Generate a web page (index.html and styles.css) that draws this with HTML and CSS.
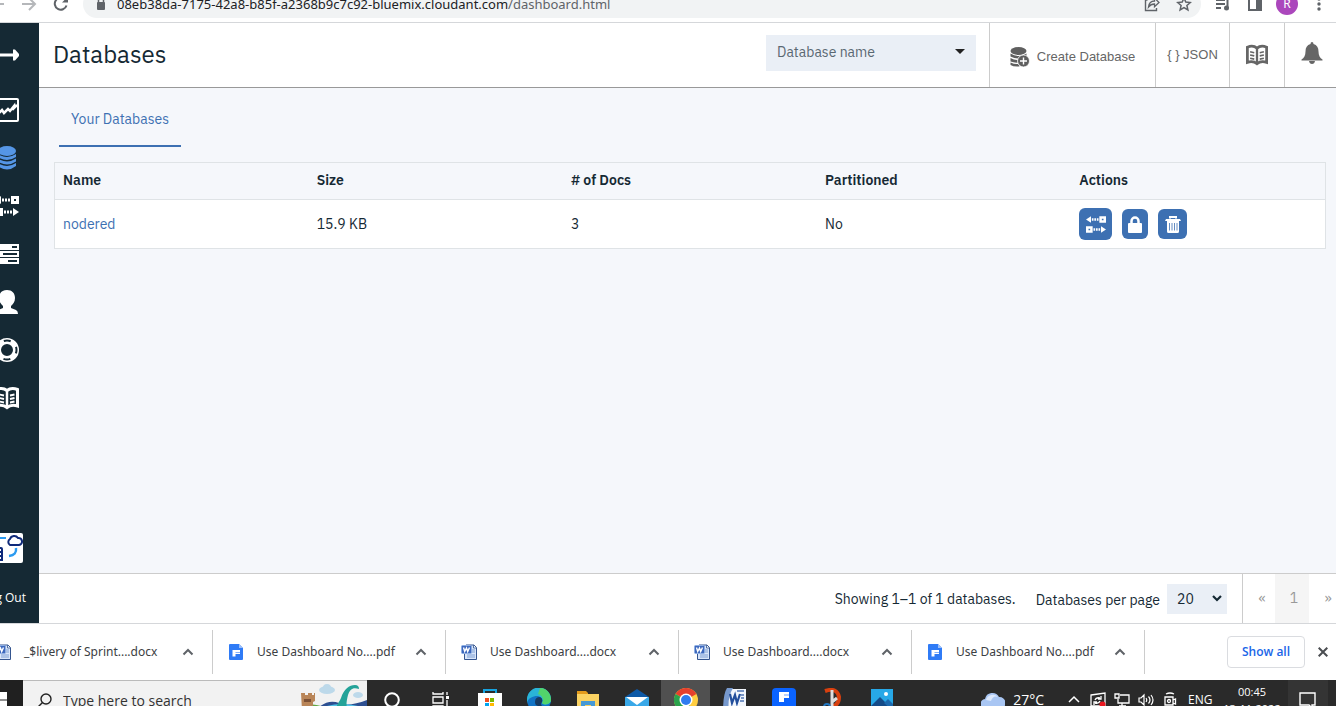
FILE: index.html
```html
<!DOCTYPE html>
<html lang="en">
<head>
<meta charset="utf-8">
<title>Databases</title>
<link rel="stylesheet" href="styles.css">
</head>
<body>
<svg class="defs" aria-hidden="true">
  <symbol id="chevron" viewBox="0 0 12 12"><path d="M1.500 8.500 6 4l4.500 4.500" fill="none" stroke="#5f6368" stroke-width="2"/></symbol>
  <symbol id="pdf" viewBox="0 0 14 16"><path d="M1 0h9l4 4v11a1 1 0 0 1-1 1H1a1 1 0 0 1-1-1V1a1 1 0 0 1 1-1z" fill="#2f7bf6"/><path d="M10 0l4 4h-4z" fill="#9cc0fb"/><path d="M3.500 6h7.500v4H6.500v2.500h-3z" fill="#fff"/><path d="M6.500 8.500H11" stroke="#2f7bf6" stroke-width=".6"/></symbol>
  <symbol id="doc" viewBox="0 0 16 16"><path d="M5 1h8l2.500 2.500v12H3.500V9z" fill="#d9e6fa" stroke="#34558f"/><path d="M12.500 1v3H15" fill="#fff" stroke="#34558f" stroke-width=".8"/><path d="M11 6h3M11 8h3M6 11h8M6 13h8" stroke="#7f9fd2"/><rect x=".5" y="1.500" width="10" height="8" rx="1" fill="#3d68bd" stroke="#8daee3"/><path d="m2.500 3.500 1.200 4 1.800-3.500 1.200 3.500 1.800-4" fill="none" stroke="#fff" stroke-width="1.400"/></symbol>
  <symbol id="replicate" viewBox="0 0 24 20"><path d="M0 4l6-4v8zM24 16l-6-4v8z"/><path d="M7 2.500h2v3H7zm3 0h2v3h-2zm3 0h2v3h-2zM9 14.500h2v3H9zm3 0h2v3h-2zm3 0h2v3h-2z"/><path fill-rule="evenodd" d="M16 0h8v8h-8zm3 3v2h2V3zM0 12h8v8H0zm3 3v2h2v-2z"/></symbol>
  <symbol id="book" viewBox="0 0 24 24"><path d="M1.500 3.500C5 2 9 2 12 4.500 15 2 19 2 22.500 3.500v16.500C19 19 15 19 12 21.500 9 19 5 19 1.500 20z" fill="none" stroke="currentColor" stroke-width="3"/><path d="M12 4v17" stroke="currentColor" stroke-width="2.500"/><path d="M4.500 8.500l4.500 1M4.500 12l4.500 1M4.500 15.500l4.500 1M15 9.500l4.500-1M15 13l4.500-1M15 16.500l4.500-1" stroke="currentColor" stroke-width="1.800"/></symbol>
</svg>

<header class="browser">
  <div class="browser-row">
    <button class="nav-btn back" aria-label="Back"><svg width="16" height="16" viewBox="0 0 16 16"><path d="M15 8H2m6-6L2 8l6 6" fill="none" stroke="#b5b7ba" stroke-width="2"/></svg></button>
    <button class="nav-btn" aria-label="Forward"><svg width="16" height="16" viewBox="0 0 16 16"><path d="M1 8h13M8 2l6 6-6 6" fill="none" stroke="#b5b7ba" stroke-width="2"/></svg></button>
    <button class="nav-btn" aria-label="Reload"><svg width="16" height="16" viewBox="0 0 16 16"><path d="M13.500 9.500A6 6 0 1 1 12.500 4" fill="none" stroke="#5f6368" stroke-width="2"/><path d="M15 .5v6H9z" fill="#5f6368"/></svg></button>
    <div class="address">
      <svg class="lock" width="10" height="14" viewBox="0 0 10 14"><rect x="1" y="5" width="8" height="8" rx="1" fill="#5f6368"/><path d="M2.500 6V3.500a2.500 2.500 0 0 1 5 0V6" fill="none" stroke="#5f6368" stroke-width="1.500"/></svg>
      <span class="url"><b>08eb38da-7175-42a8-b85f-a2368b9c7c92-bluemix.cloudant.com</b>/dashboard.html</span>
      <svg width="16" height="16" viewBox="0 0 16 16"><path d="M3.500 4H1.500v10.500h11V12" fill="none" stroke="#5f6368" stroke-width="1.400"/><path d="M4.500 11C5 7 7.500 5 10.500 5V2l4.500 4.500-4.500 4.300V8C8 8 6 9 4.500 11z" fill="none" stroke="#5f6368" stroke-width="1.300"/></svg>
      <svg width="16" height="16" viewBox="0 0 16 16"><path d="m8 2 1.800 4.100 4.500.4-3.400 3 1 4.400L8 11.600 4.100 13.900l1-4.400-3.400-3 4.500-.4z" fill="none" stroke="#5f6368" stroke-width="1.500"/></svg>
    </div>
    <div class="browser-tools">
      <svg width="16" height="16" viewBox="0 0 16 16"><path d="M1 4h9M1 8h9M1 12h5" stroke="#5f6368" stroke-width="2"/><path d="M12.500 12V3H16" fill="none" stroke="#5f6368" stroke-width="2"/><circle cx="11.500" cy="12" r="2.500" fill="#5f6368"/></svg>
      <svg width="16" height="16" viewBox="0 0 16 16"><rect x="2" y="2" width="12" height="12" fill="none" stroke="#5f6368" stroke-width="2"/><path d="M9 2h5v12H9z" fill="#5f6368"/></svg>
      <span class="avatar">R</span>
      <svg width="16" height="16" viewBox="0 0 16 16" fill="#5f6368"><circle cx="8" cy="3" r="1.700"/><circle cx="8" cy="8" r="1.700"/><circle cx="8" cy="13" r="1.700"/></svg>
    </div>
  </div>
</header>

<div class="app">
  <nav class="sidebar" aria-label="Main">
    <a href="#" class="expand" aria-label="Expand"><svg width="24" height="12" viewBox="0 0 24 12"><path d="M0 4.500h18V.5h2l5 5.500-5 5.500h-2v-4H0z" fill="#fff"/></svg></a>
    <a href="#" aria-label="Monitoring"><svg width="24" height="24" viewBox="0 0 24 24" fill="none" stroke="#fff"><rect x="1" y="1" width="22" height="22" rx="1" stroke-width="2"/><path d="m3 16 4-4 2 3 4-4 2 2 4-5v2l3-3" stroke-width="2.500"/></svg></a>
    <a href="#" aria-label="Databases"><svg width="24" height="24" viewBox="0 0 24 24" fill="#5596e6"><ellipse cx="12" cy="5" rx="9" ry="5"/><path d="M3 8q9 6 18 0v3q-9 6-18 0zM3 12.500q9 6 18 0v3q-9 6-18 0zM3 17q9 6 18 0v3q-9 7-18 0z"/></svg></a>
    <a href="#" aria-label="Replication"><svg width="24" height="20" fill="#fff"><use href="#replicate"/></svg></a>
    <a href="#" aria-label="Active tasks"><svg width="24" height="22" viewBox="0 0 24 22"><path d="M0 1h24v6H0zM0 8h24v6H0zM0 15h24v6H0z" fill="#fff"/><path d="M17 4h5M8 11h14M13 18h9" stroke="#152934" stroke-width="2"/></svg></a>
    <a href="#" aria-label="Account"><svg width="24" height="24" viewBox="0 0 24 24" fill="#fff"><path d="M12 0c5 0 8 3 8 8 0 4-2 6-4 8v2l5 2q2 1 2 4H1q0-3 2-4l5-2v-2c-2-2-4-4-4-8 0-5 3-8 8-8z"/></svg></a>
    <a href="#" aria-label="Support"><svg width="24" height="24" viewBox="0 0 24 24" fill="none" stroke="#fff"><circle cx="12" cy="12" r="9" stroke-width="6"/><circle cx="12" cy="12" r="9.500" stroke="#152934" stroke-width="2" stroke-dasharray="7 7.920" stroke-dashoffset="3.500"/></svg></a>
    <a href="#" aria-label="Documentation"><svg width="24" height="24"><use href="#book"/></svg></a>
    <div class="sidebar-end">
      <a href="#" class="brand" aria-label="Cloudant"><svg width="46" height="30" viewBox="0 0 46 30"><rect width="46" height="30" rx="2" fill="#fff"/><path d="M33 12a3.500 3.500 0 0 1 0-6 4.500 4.500 0 0 1 8-1 3.500 3.500 0 0 1 1 7z" fill="none" stroke="#0f2a7a" stroke-width="2"/><path d="M22 5h7" stroke="#2c9bf0" stroke-width="2"/><path d="M39 15q1 7-7 8" fill="none" stroke="#2c9bf0" stroke-width="2.500"/><path d="M16 15h8q1 0 1 1v11h-9M16 19h9M16 23h9" fill="none" stroke="#0f2a7a" stroke-width="2"/></svg></a>
      <a href="#" class="logout">Log Out</a>
    </div>
  </nav>

  <div class="page">
    <header class="page-head">
      <h1>Databases</h1>
      <label class="picker">
        <select aria-label="Database name"><option>Database name</option></select>
        <svg width="10" height="5" viewBox="0 0 10 5"><path d="M0 0h10L5 5z" fill="#222"/></svg>
      </label>
      <button class="head-btn create">
        <svg width="20" height="20" viewBox="0 0 20 20"><g fill="#5f5f5f"><ellipse cx="8.500" cy="4" rx="8" ry="4"/><path d="M.5 6.500q8 5 16 0v3q-8 4-16 0zM.5 11q4 2.500 8 2v2.500q-4 .5-8-1zM.5 15.500q4 2 8 1.500l1 2.500q-6 .5-9-1.500z"/><circle cx="13.500" cy="14" r="6" stroke="#fff" stroke-width=".8"/></g><path d="M13.500 10.500v7M10 14h7" stroke="#fff" stroke-width="1.400"/></svg>
        Create Database
      </button>
      <a href="#" class="head-btn json">{ } JSON</a>
      <a href="#" class="head-btn docs" aria-label="Documentation"><svg width="22" height="22"><use href="#book"/></svg></a>
      <button class="head-btn bell" aria-label="Notifications"><svg width="22" height="22" viewBox="0 0 22 22" fill="#666"><path d="M11 0q1.500 0 1.500 2c3.500 1 5 3.500 5 7.500 0 4 1.500 6.500 4 8v1H.5v-1c2.500-1.500 4-4 4-8 0-4 1.500-6.500 5-7.500Q9.500 0 11 0z"/><path d="M8 19h6q-.5 3-3 3t-3-3z"/></svg></button>
    </header>

    <main class="content">
      <div class="tabs"><a href="#" class="tab">Your Databases</a></div>
      <table class="databases">
        <thead><tr><th>Name</th><th>Size</th><th># of Docs</th><th>Partitioned</th><th>Actions</th></tr></thead>
        <tbody><tr>
          <td><a href="#">nodered</a></td><td>15.9 KB</td><td>3</td><td>No</td>
          <td><div class="actions">
            <button class="act act-rep" aria-label="Replicate"><svg width="20" height="17" fill="#fff"><use href="#replicate"/></svg></button>
            <button class="act act-lock" aria-label="Permissions"><svg width="14" height="17" viewBox="0 0 14 17"><path d="M3.500 8V5a3.500 3.500 0 0 1 7 0v3" fill="none" stroke="#fff" stroke-width="2.500"/><rect y="7" width="14" height="10" rx="1" fill="#fff"/></svg></button>
            <button class="act act-del" aria-label="Delete"><svg width="16" height="17" viewBox="0 0 16 17"><path d="M5 2.500V1h6v1.500" fill="none" stroke="#fff" stroke-width="2"/><path d="M1 3h14l1 2H0zM2 5h12v10.500q0 1.500-1.500 1.500h-9Q2 17 2 15.500z" fill="#fff"/><path d="M4.500 7v7.500M7 7v7.500M9.500 7v7.500M12 7v7.500" stroke="#3d70b2" stroke-width=".8"/></svg></button>
          </div></td>
        </tr></tbody>
      </table>
    </main>

    <footer class="page-foot">
      <span class="showing">Showing 1–1 of 1 databases.</span>
      <label class="per-page" for="per-page">Databases per page</label>
      <span class="count">
        <select id="per-page"><option>20</option></select>
        <svg width="10" height="7" viewBox="0 0 10 7"><path d="m1 1 4 4 4-4" fill="none" stroke="#152934" stroke-width="2.200"/></svg>
      </span>
      <nav class="pager" aria-label="Pages"><a href="#" class="prev">«</a><a href="#" class="current">1</a><a href="#">»</a></nav>
    </footer>
  </div>
</div>

<section class="downloads" aria-label="Downloads">
  <div class="download-list">
    <button class="download"><svg width="16" height="16"><use href="#doc"/></svg><span>_$livery of Sprint....docx</span><svg width="12" height="12"><use href="#chevron"/></svg></button>
    <button class="download"><svg width="16" height="16"><use href="#pdf"/></svg><span>Use Dashboard No....pdf</span><svg width="12" height="12"><use href="#chevron"/></svg></button>
    <button class="download"><svg width="16" height="16"><use href="#doc"/></svg><span>Use Dashboard....docx</span><svg width="12" height="12"><use href="#chevron"/></svg></button>
    <button class="download"><svg width="16" height="16"><use href="#doc"/></svg><span>Use Dashboard....docx</span><svg width="12" height="12"><use href="#chevron"/></svg></button>
    <button class="download"><svg width="16" height="16"><use href="#pdf"/></svg><span>Use Dashboard No....pdf</span><svg width="12" height="12"><use href="#chevron"/></svg></button>
  </div>
  <button class="show-all">Show all</button>
  <button class="close" aria-label="Close"><svg width="10" height="10" viewBox="0 0 10 10"><path d="m.7.7 8.600 8.600M9.300.7.7 9.300" stroke="#4a4d51" stroke-width="2"/></svg></button>
</section>

<footer class="taskbar">
  <div class="taskbar-row">
    <button class="start" aria-label="Start"><svg width="16" height="16" viewBox="0 0 16 16"><path d="M0 0h7.500v7.500H0zM8.500 0H16v7.500H8.500zM0 8.500h7.500V16H0zM8.500 8.500H16V16H8.500z" fill="#fff"/></svg></button>
    <label class="search">
      <svg width="16" height="16" viewBox="0 0 16 16" fill="none" stroke="#222" stroke-width="1.400"><circle cx="10" cy="6" r="5"/><path d="m6.500 9.500-6 6"/></svg>
      <input type="text" placeholder="Type here to search" aria-label="Search">
      <svg class="scene" width="68" height="40" viewBox="0 0 68 40"><path d="M20 26q10-8 20-4t28-3v21H14z" fill="#2d4f91"/><path d="M22 27q20-8 44 0v13H18z" fill="#54c3e8"/><path d="M0 27q14-7 26 0l8 13H0z" fill="#63a744"/><path d="M2 12h4v2h3v-2h4v2h2v-2h1v8l-2 1v8H3z" fill="#b98558"/><path d="M5 18h7v3H5z" fill="#7c5136"/><path d="M38 29c-2-4 2-7 4-12 3-9 8-13 14-13q4 0 4 4c-6-2-9 0-11 6-2 8-2 11 0 15z" fill="#24a399"/><g fill="#bdd9ea"><ellipse cx="28" cy="9" rx="8" ry="4"/><circle cx="28" cy="7" r="4"/><ellipse cx="59" cy="14" rx="5" ry="3"/></g></svg>
    </label>
    <div class="apps">
      <button aria-label="Cortana"><svg width="18" height="18" viewBox="0 0 18 18"><circle cx="9" cy="9" r="6.800" fill="none" stroke="#fff" stroke-width="2"/></svg></button>
      <button aria-label="Task view"><svg width="18" height="18" viewBox="0 0 18 18" fill="none" stroke="#fff" stroke-width="1.300"><path d="M1 1v2h10V1M1 17v-2h10v2M1 6h10v6H1zM15 1v3M15 9v8"/><path d="M14 5h3v3h-3z" fill="#fff" stroke="none"/></svg></button>
      <button aria-label="Store"><svg width="24" height="24" viewBox="0 0 24 24"><path d="M6 6V2h12v4" fill="none" stroke="#17a3df" stroke-width="2"/><path d="M0 5h24v17H0z" fill="#fff"/><path d="M7 10h4v4H7z" fill="#f25022"/><path d="M12 10h4v4h-4z" fill="#7fba00"/><path d="M7 15h4v4H7z" fill="#00a4ef"/><path d="M12 15h4v4h-4z" fill="#ffb900"/></svg></button>
      <button aria-label="Edge"><svg width="24" height="24" viewBox="0 0 24 24"><circle cx="12" cy="12" r="12" fill="#1273c5"/><path d="M0 11a12 12 0 0 1 24 1c0 5-8 6-9 3 2-3-1-7-5-7S1 10 0 15z" fill="#2ab4d8"/><path d="M13 0c7 0 11 6 11 12 0 4-7 6-9 3 2-3 1-7-4-9z" fill="#52d36b"/><path d="M8 14q0-5 5-5 3 1 2 5-2 2 0 4-7 1-7-4z" fill="#173b62"/></svg></button>
      <button aria-label="File Explorer"><svg width="22" height="20" viewBox="0 0 22 20"><path d="M0 1h9l2 2v5H0z" fill="#e39b1c"/><path d="M0 4h22v16H0z" fill="#fad262"/><path d="M4 20v-9h14v9h-4v-5H8v5z" fill="#4699d5"/></svg></button>
      <button aria-label="Mail"><svg width="24" height="22" viewBox="0 0 24 22"><path d="m0 8 12-8 12 8v6H0z" fill="#0e59a6"/><path d="M0 8h24v14H0z" fill="#39a8e8"/><path d="M1 8h22l-11 8z" fill="#fff"/></svg></button>
      <button class="active" aria-label="Chrome"><svg width="24" height="24" viewBox="0 0 24 24"><circle cx="12" cy="12" r="12" fill="#ffcd40"/><path d="M12 12 1.600 6A12 12 0 0 1 22.400 6z" fill="#e6402e"/><path d="M12 12 1.600 6A12 12 0 0 0 12 24l5-9z" fill="#2ba24c"/><circle cx="12" cy="12" r="6.500" fill="#fff"/><circle cx="12" cy="12" r="5" fill="#2f7bf0"/></svg></button>
      <button aria-label="Word"><svg width="24" height="24" viewBox="0 0 24 24"><path d="M6 1h17v22H4z" fill="#f2f6fc"/><path d="M4 0h6Q4 10 6 24H0Q0 6 4 0z" fill="#7799cd"/><path d="m7 6 2 9 3-8 2 8 3-9" fill="none" stroke="#234f9c" stroke-width="2.200"/><path d="M14 3h7M18 7h3M18 10h3M17 13h4M8 19h13" stroke="#5075b4" stroke-width="1.400"/></svg></button>
      <button aria-label="Documents"><svg width="24" height="24" viewBox="0 0 24 24"><rect width="24" height="24" rx="4" fill="#0a63ff"/><path d="M7 4h10v6h-5v4H7z" fill="#fff"/><path d="M12 7h5" stroke="#0a63ff" stroke-width=".6"/></svg></button>
      <button aria-label="Snipping Tool"><svg width="22" height="24" viewBox="0 0 22 24"><path d="M3 3q12-4 14 6 0 9-9 10" fill="none" stroke="#d8400f" stroke-width="4"/><path d="M10 2v18M10 14l5-4" stroke="#dedede" stroke-width="3"/><circle cx="5" cy="19" r="3" fill="none" stroke="#2277c2" stroke-width="2"/></svg></button>
      <button aria-label="Photos"><svg width="22" height="22" viewBox="0 0 22 22"><path d="M0 0h22v22H0z" fill="#27a8e7"/><path d="m0 17 9-9 13 13v1H0z" fill="#144a87"/><path d="m13 14 4-4 5 5v7z" fill="#1c69ae"/><circle cx="15" cy="5" r="2" fill="#fff"/></svg></button>
    </div>
    <div class="weather"><svg width="24" height="18" viewBox="0 0 24 18"><path d="M5 18a5 5 0 0 1-1-10 7.500 7.500 0 0 1 14-2 6 6 0 0 1 1 12z" fill="#a9c6f3"/><path d="M5 9a7 7 0 0 1 12-3q-5-2-7 4z" fill="#dce9fd"/></svg>27°C</div>
    <div class="tray">
      <svg width="16" height="16" viewBox="0 0 16 16"><path d="m3 10 5-5 5 5" fill="none" stroke="#fff" stroke-width="1.500"/></svg>
      <svg width="16" height="16" viewBox="0 0 16 16" fill="none" stroke="#fff" stroke-width="1.300"><path d="M1 3l14-2v13H1zM5 8q1-3 5-2M11 4v3H8M10 9q-1 3-5 2M4 13v-3h3"/><circle cx="12.500" cy="12.500" r="3" fill="#ea1720" stroke="none"/></svg>
      <svg width="16" height="16" viewBox="0 0 16 16" fill="none" stroke="#fff" stroke-width="1.300"><path d="M6 3h9v8H4V7M1 2h4v4H1zM8 11v3M5 14h7"/></svg>
      <svg width="16" height="16" viewBox="0 0 16 16" fill="none" stroke="#fff" stroke-width="1.200"><path d="M1 6h2l3-3v10l-3-3H1zM8 6q1.500 2 0 4M10.500 4.500q3 3.500 0 7M13 3q4 5 0 10"/></svg>
      <svg width="16" height="16" viewBox="0 0 16 16" fill="none" stroke="#fff" stroke-width="1.300"><path d="M4 2q4-2 8 0M3 5h8v8H3zM11 8l2.500-1v5L11 11"/><circle cx="7" cy="9" r="1.500"/></svg>
    </div>
    <span class="lang">ENG</span>
    <div class="clock"><span>00:45</span><span>13-11-2022</span></div>
    <button class="notices" aria-label="Notifications"><svg width="18" height="18" viewBox="0 0 18 18" fill="none" stroke="#fff" stroke-width="1.400"><path d="M1 2h15v12h-3v3l-3-3H1z"/></svg></button>
  </div>
</footer>
</body>
</html>
```
FILE: styles.css
```css
* { box-sizing: border-box; }
html, body { height: 100%; }
body {
  margin: 0;
  display: flex;
  flex-direction: column;
  overflow: hidden;
  background: #fff;
  color: #152934;
  font: 14px/20px "IBM Plex Sans", Inter, sans-serif;
}
.defs { display: none; }
svg { flex: none; display: block; }
button { border: 0; padding: 0; background: none; font: inherit; color: inherit; display: flex; align-items: center; justify-content: center; }
a { color: #3d70b2; text-decoration: none; }
select { appearance: none; border: 0; border-radius: 0; font: inherit; color: inherit; }

/* Browser toolbar */
.browser {
  flex: none;
  height: 23px;
  display: flex;
  align-items: flex-end;
  border-bottom: 1px solid #d5d7da;
  overflow: hidden;
  font-family: "Segoe UI", "Noto Sans", sans-serif;
}
.browser-row { flex: 1; height: 36px; display: flex; align-items: center; }
.nav-btn { width: 32px; height: 32px; }
.nav-btn.back { width: 13px; justify-content: flex-end; padding-right: 8px; }
.address {
  flex: 1;
  height: 28px;
  margin-left: 6px;
  padding: 0 9px 0 13px;
  display: flex;
  align-items: center;
  gap: 16px;
  border-radius: 14px;
  background: #f1f3f4;
}
.lock { margin-right: -5px; }
.url { flex: 1; white-space: nowrap; color: #5f6368; font-size: 13px; }
.url b { font-weight: 400; color: #202124; }
.browser-tools { display: flex; align-items: center; gap: 16px; padding: 0 9px 0 14px; }
.avatar { width: 22px; height: 22px; margin: 0 -3px; border-radius: 50%; background: #ab47bc; color: #fff; font-size: 12px; line-height: 22px; text-align: center; }

/* Application frame */
.app { flex: 1; min-height: 0; display: flex; }
.sidebar { flex: none; width: 39px; display: flex; flex-direction: column; overflow: hidden; background: #152934; }
.sidebar a { flex: none; height: 48px; padding-right: 20px; display: flex; align-items: center; justify-content: flex-end; color: #fff; }
.sidebar .expand { height: 63px; }
.sidebar-end { margin-top: auto; }
.sidebar .brand { padding-right: 16px; }
.sidebar .logout { height: 51px; padding-right: 13px; white-space: nowrap; font: 500 12px/20px "Open Sans", sans-serif; }
.page { flex: 1; min-width: 0; display: flex; flex-direction: column; background: #f5f7fb; }

/* Page header */
.page-head { flex: none; height: 65px; display: flex; align-items: stretch; background: #fff; border-bottom: 1px solid #999; overflow: hidden; }
.page-head h1 { flex: 1; margin: 0; padding-left: 14px; font-size: 24px; line-height: 62px; font-weight: 400; }
.picker { width: 210px; height: 36px; margin: 12px 13px 0 0; display: grid; align-items: center; background: #eaeff6; color: #5a6872; }
.picker select, .picker svg { grid-area: 1 / 1; }
.picker select { height: 36px; padding: 0 11px 2px; background: transparent; }
.picker svg { justify-self: end; margin-right: 11px; margin-bottom: 4px; }
.head-btn { flex: none; display: flex; align-items: center; justify-content: center; gap: 7px; border-left: 1px solid #ccc; color: #666; font: 13px/20px "Liberation Sans", Arial, sans-serif; white-space: nowrap; }
.create { width: 166px; padding-top: 4px; }
.json { width: 74px; }
.docs { width: 55px; }
.bell { width: 52px; padding: 0 0 4px 3px; }

/* Content */
.content { flex: 1; padding: 0 10px 0 15px; }
.tabs { display: flex; padding-left: 5px; margin-bottom: 15px; }
.tab { height: 59px; padding: 21px 12px 0; border-bottom: 2px solid #3d70b2; }
.databases { width: 100%; table-layout: fixed; border-collapse: collapse; border: 1px solid #dfe3e6; text-align: left; }
.databases th { height: 37px; padding: 0 8px 2px; font-weight: 600; }
.databases td { height: 49px; padding: 0 8px; background: #fff; border-top: 1px solid #dfe3e6; }
.actions { display: flex; align-items: center; gap: 10px; }
.act { height: 30px; border-radius: 6px; background: #3d70b2; }
.act-rep { width: 33px; height: 32px; }
.act-lock { width: 26px; }
.act-del { width: 29px; }

/* Page footer */
.page-foot { flex: none; height: 50px; display: flex; align-items: center; justify-content: flex-end; background: #fff; border-top: 1px solid #ccc; }
.showing { margin-right: 20px; }
.per-page { margin-right: 7px; padding-top: 2px; }
.count { width: 60px; height: 30px; margin-right: 15px; display: grid; align-items: center; background: #eaeff6; }
.count select, .count svg { grid-area: 1 / 1; }
.count select { height: 30px; padding: 0 10px; background: transparent; }
.count svg { justify-self: end; margin-right: 5px; }
.pager { width: 94px; height: 100%; display: flex; overflow: hidden; border-left: 1px solid #ccc; }
.pager a { flex: none; width: 34px; padding-left: 4px; line-height: 49px; text-align: center; color: #999; }
.pager .prev { width: 32px; padding-left: 6px; }
.pager .current { background: #f5f5f5; }

/* Downloads shelf */
.downloads { flex: none; height: 57px; padding-right: 8px; display: flex; align-items: center; border-top: 1px solid #d5d7da; overflow: hidden; font: 12px/20px "Segoe UI", "Noto Sans", sans-serif; color: #3c4043; }
.download-list { flex: 1; min-width: 0; margin-left: -20px; display: flex; }
.download { flex: none; width: 233px; height: 44px; padding: 0 18px 0 15px; gap: 13px; border-right: 1px solid #ccc; }
.download span { flex: 1; text-align: left; white-space: nowrap; }
.show-all { width: 78px; height: 32px; margin-right: 13px; border: 1px solid #dadce0; border-radius: 4px; color: #1a66e8; font: 600 12px/20px "Open Sans", sans-serif; }

/* Taskbar */
.taskbar { flex: none; height: 26px; overflow: hidden; background: #2a2a2a; color: #fff; font-family: "Segoe UI", "Open Sans", sans-serif; }
.taskbar-row { height: 40px; display: flex; align-items: center; }
.start { width: 23px; height: 40px; padding-right: 16px; justify-content: flex-end; background: #202020; }
.search { width: 344px; height: 40px; padding-left: 13px; display: flex; align-items: center; gap: 11px; background: #f2f2f2; border-top: 1px solid #bbb; }
.search input { flex: 1; min-width: 0; border: 0; padding: 0; background: none; font: inherit; }
.search input::placeholder { color: #333; opacity: 1; }
.apps { display: flex; }
.apps button { width: 49px; height: 40px; }
.apps .active { background: #505050; }
.weather { margin-left: auto; display: flex; align-items: center; gap: 8px; }
.tray { display: flex; gap: 8px; margin: 0 10px 0 22px; }
.lang { width: 24px; font-size: 12px; }
.clock { width: 76px; padding-left: 4px; display: flex; flex-direction: column; align-items: center; font-size: 11px; line-height: 17px; }
.notices { width: 40px; height: 40px; margin-right: 8px; background: #343434; }
```
